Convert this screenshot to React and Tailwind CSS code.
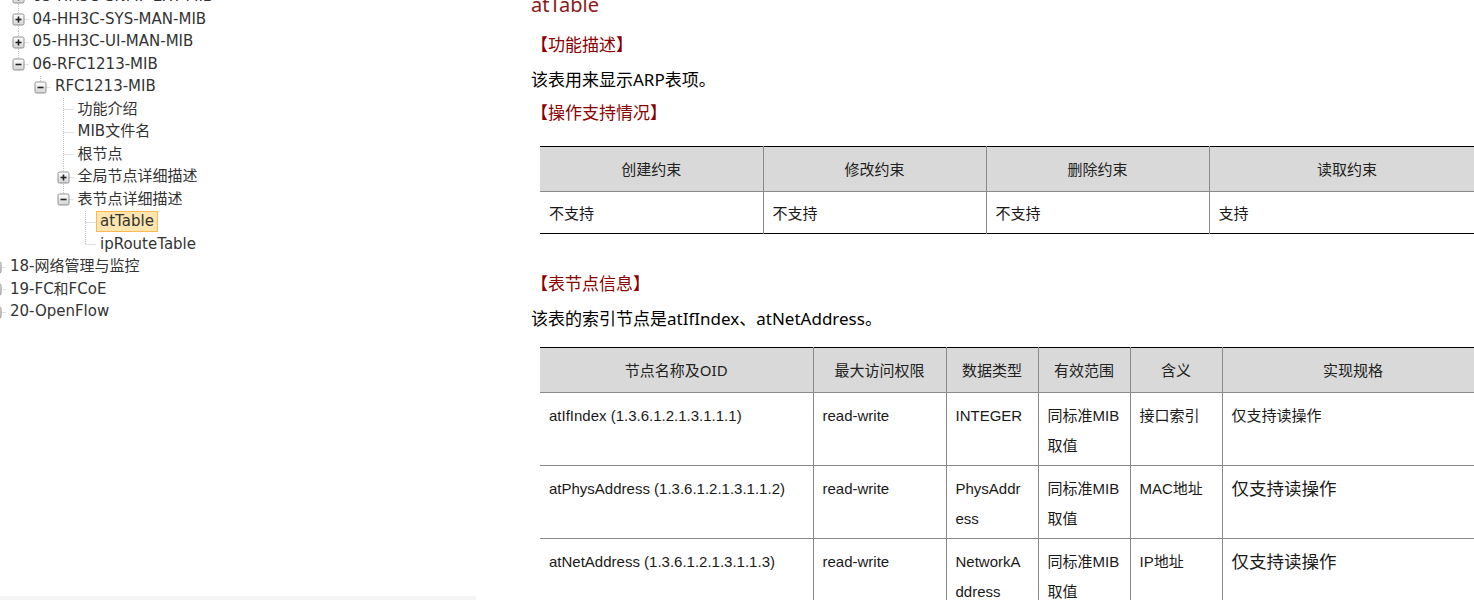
const TREE = [
  { level: 1, label: '03-HH3C-SNMP-EXT-MIB', type: 'plus', line: 'center' },
  { level: 1, label: '04-HH3C-SYS-MAN-MIB', type: 'plus', line: 'center' },
  { level: 1, label: '05-HH3C-UI-MAN-MIB', type: 'plus', line: 'center' },
  { level: 1, label: '06-RFC1213-MIB', type: 'minus', line: 'bottom' },
  { level: 2, label: 'RFC1213-MIB', type: 'minus', line: 'bottom' },
  { level: 3, label: '功能介绍', type: 'leaf', line: 'center' },
  { level: 3, label: 'MIB文件名', type: 'leaf', line: 'center' },
  { level: 3, label: '根节点', type: 'leaf', line: 'center' },
  { level: 3, label: '全局节点详细描述', type: 'plus', line: 'center' },
  { level: 3, label: '表节点详细描述', type: 'minus', line: 'bottom' },
  { level: 4, label: 'atTable', type: 'leaf', line: 'center', selected: true },
  { level: 4, label: 'ipRouteTable', type: 'leaf', line: 'bottom' },
  { level: 0, label: '18-网络管理与监控', type: 'plus', line: 'center' },
  { level: 0, label: '19-FC和FCoE', type: 'plus', line: 'center' },
  { level: 0, label: '20-OpenFlow', type: 'plus', line: 'bottom' },
]

const INDENT = ['w-0', 'w-[22.5px]', 'w-[45px]', 'w-[67.5px]', 'w-[90px]']

function Switch({ type, line }) {
  return (
    <svg width="17" height="22.5" viewBox="0 0 17 22.5" className="shrink-0">
      <defs>
        <linearGradient id="tg" x1="0" y1="0" x2="0" y2="1">
          <stop offset="0" stopColor="#ffffff" />
          <stop offset="1" stopColor="#d4d4d4" />
        </linearGradient>
      </defs>
      <line x1="6.5" y1="0" x2="6.5" y2={line === 'bottom' ? 11.5 : 22.5} stroke="#c2c2c2" strokeDasharray="1 1" />
      <line x1="6.5" y1="11.5" x2="17" y2="11.5" stroke="#c2c2c2" strokeDasharray="1 1" />
      {type !== 'leaf' && (
        <g>
          <rect x="1" y="6" width="11" height="11" rx="1.5" fill="url(#tg)" stroke="#8f8f8f" />
          <line x1="3.5" y1="11.5" x2="9.5" y2="11.5" stroke="#222" strokeWidth="1.6" />
          {type === 'plus' && <line x1="6.5" y1="8.5" x2="6.5" y2="14.5" stroke="#222" strokeWidth="1.6" />}
        </g>
      )}
    </svg>
  )
}

function Tree() {
  return (
    <div className="mt-[-14.5px] ml-[-11px] font-['DejaVu_Sans','Noto_Sans_CJK_SC',sans-serif] text-[15px] text-[#333]">
      {TREE.map((n) => (
        <div key={n.label} className="flex items-center h-[22.5px] whitespace-nowrap">
          <div className={`${INDENT[n.level]} shrink-0`} />
          <Switch type={n.type} line={n.line} />
          <span
            className={
              n.selected
                ? 'px-[3px] h-[21px] leading-[19px] border border-[#ffb951] bg-[#ffe6b0]'
                : 'px-[3px] h-[21px] leading-[19px] border border-transparent'
            }
          >
            {n.label}
          </span>
        </div>
      ))}
    </div>
  )
}

const CELL = "font-['Liberation_Sans','Noto_Sans_CJK_SC',sans-serif] text-[15px] text-[#1a1a1a]"
const HEAD = "font-['Noto_Sans','Noto_Sans_CJK_SC',sans-serif] text-[15px] text-[#222] font-normal bg-[#d9d9d9] text-center align-middle border-x border-[#8a8a8a] first:border-l-0"

const NODES = [
  ['atIfIndex (1.3.6.1.2.1.3.1.1.1)', 'read-write', 'INTEGER', '同标准MIB取值', '接口索引', '仅支持读操作', false],
  ['atPhysAddress (1.3.6.1.2.1.3.1.1.2)', 'read-write', 'PhysAddress', '同标准MIB取值', 'MAC地址', '仅支持读操作', true],
  ['atNetAddress (1.3.6.1.2.1.3.1.1.3)', 'read-write', 'NetworkAddress', '同标准MIB取值', 'IP地址', '仅支持读操作', true],
]

export default function App() {
  return (
    <div className="flex h-[600px] w-[1474px] overflow-hidden bg-white">
      <div className="w-[476px] shrink-0 h-[600px] flex flex-col overflow-hidden">
        <div className="flex-1 overflow-hidden">
          <Tree />
        </div>
        <div className="h-[4px] bg-[#f5f5f5]" />
      </div>

      <div className="pl-[55px] flex-1 min-w-0 font-['Noto_Sans','Noto_Sans_CJK_SC',sans-serif]">
        <h1 className="mt-[-10px] text-[20px] leading-[30px] font-normal text-[#8b1a1a]">atTable</h1>
        <p className="mt-[10px] text-[17px] leading-[30px] text-[#8b0000]">【功能描述】</p>
        <p className="mt-[5px] text-[17px] leading-[30px] text-black">该表用来显示ARP表项。</p>
        <p className="mt-[3px] text-[17px] leading-[30px] text-[#8b0000]">【操作支持情况】</p>

        <table className="mt-[18px] ml-[9px] table-fixed border-collapse w-[945px]">
          <colgroup>
            <col className="w-[223px]" />
            <col className="w-[223px]" />
            <col className="w-[223px]" />
            <col className="w-[276px]" />
          </colgroup>
          <thead>
            <tr className="border-t-[1.5px] border-black border-b border-b-[#8a8a8a]">
              {['创建约束', '修改约束', '删除约束', '读取约束'].map((h) => (
                <th key={h} className={`${HEAD} h-[45px]`}>{h}</th>
              ))}
            </tr>
          </thead>
          <tbody>
            <tr className="border-b border-black">
              {['不支持', '不支持', '不支持', '支持'].map((c, i) => (
                <td key={i} className={`${CELL} h-[42px] px-[9px] pt-[2px] leading-[30px] border-x border-[#8a8a8a] first:border-l-0`}>{c}</td>
              ))}
            </tr>
          </tbody>
        </table>

        <p className="mt-[35px] text-[17px] leading-[30px] text-[#8b0000]">【表节点信息】</p>
        <p className="mt-[5px] text-[17px] leading-[30px] text-black">该表的索引节点是atIfIndex、atNetAddress。</p>

        <table className="mt-[13px] ml-[9px] table-fixed border-collapse w-[944px]">
          <colgroup>
            <col className="w-[273px]" />
            <col className="w-[133px]" />
            <col className="w-[92px]" />
            <col className="w-[92px]" />
            <col className="w-[92px]" />
            <col className="w-[262px]" />
          </colgroup>
          <thead>
            <tr className="border-t-[1.5px] border-black border-b border-b-[#8a8a8a]">
              {['节点名称及OID', '最大访问权限', '数据类型', '有效范围', '含义', '实现规格'].map((h) => (
                <th key={h} className={`${HEAD} h-[45px]`}>{h}</th>
              ))}
            </tr>
          </thead>
          <tbody>
            {NODES.map((r) => (
              <tr key={r[0]} className="border-b border-[#8a8a8a]">
                {r.slice(0, 5).map((c, i) => (
                  <td key={i} className={`${CELL} align-top px-[9px] pt-[8px] pb-[4px] leading-[30px] break-all border-x border-[#8a8a8a] first:border-l-0`}>{c}</td>
                ))}
                <td className={`${CELL} align-top px-[9px] pt-[8px] pb-[4px] leading-[30px] border-x border-[#8a8a8a] ${r[6] ? 'text-[17.5px]' : ''}`}>{r[5]}</td>
              </tr>
            ))}
          </tbody>
        </table>
      </div>
    </div>
  )
}
